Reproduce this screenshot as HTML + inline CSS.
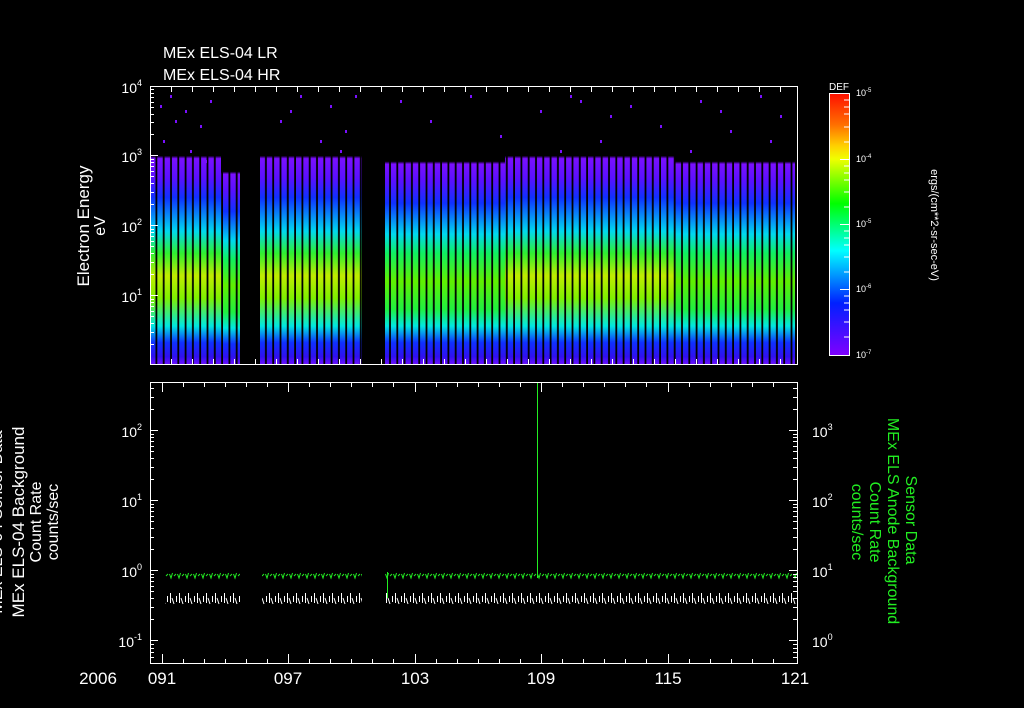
<!DOCTYPE html>
<html><head><meta charset="utf-8"><style>
html,body{margin:0;padding:0;background:#000;}
svg{display:block}
text{font-family:"Liberation Sans",sans-serif;fill:#fff}
</style></head><body>
<svg width="1024" height="708" viewBox="0 0 1024 708" xmlns="http://www.w3.org/2000/svg">
<defs>
<linearGradient id="sp" x1="0" y1="0" x2="0" y2="1">
<stop offset="0" stop-color="#7a00ff" stop-opacity="0"/>
<stop offset="0.27" stop-color="#7a00ff" stop-opacity="0"/>
<stop offset="0.28" stop-color="#7a10ff"/>
<stop offset="0.34" stop-color="#5a10ff"/>
<stop offset="0.42" stop-color="#1030ff"/>
<stop offset="0.53" stop-color="#00d8f0"/>
<stop offset="0.6" stop-color="#10f060"/>
<stop offset="0.7" stop-color="#60f000"/>
<stop offset="0.8" stop-color="#20f040"/>
<stop offset="0.86" stop-color="#00e8e0"/>
<stop offset="0.92" stop-color="#1030ff"/>
<stop offset="0.97" stop-color="#3010f0"/>
<stop offset="1" stop-color="#7010ff"/>
</linearGradient>
<linearGradient id="sp2" x1="0" y1="0" x2="0" y2="1">
<stop offset="0" stop-color="#7a00ff" stop-opacity="0"/>
<stop offset="0.25" stop-color="#7a00ff" stop-opacity="0"/>
<stop offset="0.26" stop-color="#7a10ff"/>
<stop offset="0.33" stop-color="#5a10ff"/>
<stop offset="0.4" stop-color="#1030ff"/>
<stop offset="0.52" stop-color="#00d8f0"/>
<stop offset="0.6" stop-color="#30f030"/>
<stop offset="0.68" stop-color="#c0ec00"/>
<stop offset="0.76" stop-color="#80f000"/>
<stop offset="0.86" stop-color="#00e8e0"/>
<stop offset="0.92" stop-color="#1030ff"/>
<stop offset="0.97" stop-color="#3010f0"/>
<stop offset="1" stop-color="#7010ff"/>
</linearGradient>
<linearGradient id="cb" x1="0" y1="0" x2="0" y2="1">
<stop offset="0" stop-color="#ff1000"/>
<stop offset="0.12" stop-color="#ff7000"/>
<stop offset="0.2" stop-color="#ffd000"/>
<stop offset="0.25" stop-color="#f0ff00"/>
<stop offset="0.42" stop-color="#00ff00"/>
<stop offset="0.6" stop-color="#00ffff"/>
<stop offset="0.8" stop-color="#0020ff"/>
<stop offset="1" stop-color="#8000ff"/>
</linearGradient>
<pattern id="stripes" x="150" y="0" width="7.3" height="10" patternUnits="userSpaceOnUse">
<rect x="5.5" y="0" width="1.8" height="10" fill="#000"/>
</pattern>
<pattern id="gz" x="385" y="570" width="8" height="12" patternUnits="userSpaceOnUse">
<path d="M0.5 4 L2 8 L3.5 3 M5 6 L7 4" stroke="#2e2" fill="none" stroke-width="1"/>
</pattern>
<pattern id="wz" x="385" y="590" width="9" height="18" patternUnits="userSpaceOnUse">
<path d="M1.5 3 L1.5 13 M3 8 L5 14 M7.5 6 L7.5 12" stroke="#fff" fill="none" stroke-width="1"/>
</pattern>
</defs>

<text x="163" y="58" font-size="16">MEx ELS-04 LR</text>
<text x="163" y="80" font-size="16">MEx ELS-04 HR</text>

<rect x="151" y="86" width="70" height="279" fill="url(#sp2)"/>
<rect x="221" y="100" width="19" height="265" fill="url(#sp)"/>
<rect x="260" y="86" width="102" height="279" fill="url(#sp2)"/>
<rect x="385" y="86" width="120" height="279" fill="url(#sp)"/>
<rect x="505" y="86" width="170" height="279" fill="url(#sp2)"/>
<rect x="675" y="86" width="120" height="279" fill="url(#sp)"/>
<rect x="150" y="86" width="647" height="279" fill="url(#stripes)"/>
<g fill="#7a10ff">
<rect x="170" y="95" width="2" height="3"/><rect x="185" y="110" width="2" height="3"/><rect x="200" y="125" width="2" height="3"/><rect x="163" y="140" width="2" height="3"/><rect x="210" y="100" width="2" height="3"/><rect x="190" y="150" width="2" height="3"/><rect x="175" y="120" width="2" height="3"/><rect x="205" y="160" width="2" height="3"/><rect x="160" y="105" width="2" height="3"/>
<rect x="280" y="120" width="2" height="3"/><rect x="300" y="95" width="2" height="3"/><rect x="330" y="105" width="2" height="3"/><rect x="345" y="130" width="2" height="3"/><rect x="320" y="140" width="2" height="3"/><rect x="355" y="95" width="2" height="3"/><rect x="290" y="110" width="2" height="3"/><rect x="340" y="150" width="2" height="3"/>
<rect x="400" y="100" width="2" height="3"/><rect x="430" y="120" width="2" height="3"/><rect x="470" y="95" width="2" height="3"/><rect x="500" y="135" width="2" height="3"/><rect x="540" y="110" width="2" height="3"/><rect x="570" y="95" width="2" height="3"/><rect x="600" y="140" width="2" height="3"/><rect x="630" y="105" width="2" height="3"/><rect x="660" y="125" width="2" height="3"/><rect x="700" y="100" width="2" height="3"/><rect x="730" y="130" width="2" height="3"/><rect x="760" y="95" width="2" height="3"/><rect x="780" y="115" width="2" height="3"/><rect x="690" y="150" width="2" height="3"/><rect x="560" y="150" width="2" height="3"/><rect x="580" y="100" width="2" height="3"/><rect x="610" y="115" width="2" height="3"/><rect x="720" y="110" width="2" height="3"/><rect x="770" y="140" width="2" height="3"/>
</g>
<g stroke="#fff" stroke-width="1" fill="none">
<path d="M150.5 86 V365 M797.5 86 V365 M150 86.5 H797 M150 364.5 H797"/>
<path d="M150 155.5 h8 M150 225.5 h8 M150 295.5 h8 M150 134.5h4 M150 122.5h4 M150 114.5h4 M150 107.5h4 M150 102.5h4 M150 97.5h4 M150 93.5h4 M150 89.5h4 M150 204.5h4 M150 192.5h4 M150 183.5h4 M150 176.5h4 M150 171.5h4 M150 166.5h4 M150 162.5h4 M150 159.5h4 M150 274.5h4 M150 262.5h4 M150 253.5h4 M150 246.5h4 M150 241.5h4 M150 236.5h4 M150 232.5h4 M150 229.5h4 M150 344.5h4 M150 332.5h4 M150 323.5h4 M150 316.5h4 M150 311.5h4 M150 306.5h4 M150 302.5h4 M150 299.5h4"/>
<path d="M171.5 86v6 M192.5 86v6 M213.5 86v6 M234.5 86v6 M255.5 86v6 M276.5 86v6 M297.5 86v6 M318.5 86v6 M339.5 86v6 M360.5 86v6 M381.5 86v6 M402.5 86v6 M423.5 86v6 M444.5 86v6 M465.5 86v6 M486.5 86v6 M507.5 86v6 M528.5 86v6 M549.5 86v6 M570.5 86v6 M591.5 86v6 M612.5 86v6 M633.5 86v6 M654.5 86v6 M675.5 86v6 M696.5 86v6 M717.5 86v6 M738.5 86v6 M759.5 86v6 M780.5 86v6"/>
<path d="M171.5 365v-6 M192.5 365v-6 M213.5 365v-6 M234.5 365v-6 M255.5 365v-6 M276.5 365v-6 M297.5 365v-6 M318.5 365v-6 M339.5 365v-6 M360.5 365v-6 M381.5 365v-6 M402.5 365v-6 M423.5 365v-6 M444.5 365v-6 M465.5 365v-6 M486.5 365v-6 M507.5 365v-6 M528.5 365v-6 M549.5 365v-6 M570.5 365v-6 M591.5 365v-6 M612.5 365v-6 M633.5 365v-6 M654.5 365v-6 M675.5 365v-6 M696.5 365v-6 M717.5 365v-6 M738.5 365v-6 M759.5 365v-6 M780.5 365v-6"/>
</g>
<g font-size="14" text-anchor="end">
<text x="142" y="93">10<tspan font-size="9" dy="-7">4</tspan></text>
<text x="142" y="162">10<tspan font-size="9" dy="-7">3</tspan></text>
<text x="142" y="232">10<tspan font-size="9" dy="-7">2</tspan></text>
<text x="142" y="302">10<tspan font-size="9" dy="-7">1</tspan></text>
</g>
<text transform="translate(89,226) rotate(-90)" font-size="17" text-anchor="middle">Electron Energy</text>
<text transform="translate(105,226) rotate(-90)" font-size="16" text-anchor="middle">eV</text>

<text x="829" y="90" font-size="10">DEF</text>
<rect x="829.5" y="93.5" width="20" height="262" fill="url(#cb)" stroke="#fff"/>
<g stroke="#fff"><path d="M840 159.5h9 M840 224.5h9 M840 289.5h9 M844 100h5 M844 107h5 M844 114h5 M844 127h5 M844 142h5 M844 166h5 M844 173h5 M844 180h5 M844 192h5 M844 207h5 M844 231h5 M844 238h5 M844 245h5 M844 257h5 M844 272h5 M844 296h5 M844 303h5 M844 310h5 M844 322h5 M844 337h5"/></g>
<g font-size="9">
<text x="856" y="96">10<tspan font-size="6" dy="-4">-5</tspan></text>
<text x="856" y="162">10<tspan font-size="6" dy="-4">-4</tspan></text>
<text x="856" y="227">10<tspan font-size="6" dy="-4">-5</tspan></text>
<text x="856" y="292">10<tspan font-size="6" dy="-4">-6</tspan></text>
<text x="856" y="358">10<tspan font-size="6" dy="-4">-7</tspan></text>
</g>
<text transform="translate(931,225) rotate(90)" font-size="11" text-anchor="middle">ergs/(cm**2-sr-sec-eV)</text>

<rect x="385" y="570" width="412" height="12" fill="url(#gz)"/>
<rect x="262" y="570" width="100" height="12" fill="url(#gz)"/>
<rect x="165" y="570" width="75" height="12" fill="url(#gz)"/>
<rect x="385" y="590" width="412" height="18" fill="url(#wz)"/>
<rect x="262" y="590" width="100" height="18" fill="url(#wz)"/>
<rect x="165" y="590" width="75" height="18" fill="url(#wz)"/>
<rect x="537" y="382" width="1" height="196" fill="#2e2"/>
<rect x="387" y="572" width="1" height="26" fill="#2e2"/>
<g stroke="#fff" fill="none">
<path d="M150.5 382 V664 M797.5 382 V664 M150 382.5 H797 M150 663.5 H797"/>
<path d="M150 430.5h8 M150 500.5h8 M150 570.5h8 M150 640.5h8 M150 409.5h4 M150 397.5h4 M150 388.5h4 M150 479.5h4 M150 467.5h4 M150 458.5h4 M150 451.5h4 M150 446.5h4 M150 441.5h4 M150 437.5h4 M150 434.5h4 M150 549.5h4 M150 537.5h4 M150 528.5h4 M150 521.5h4 M150 516.5h4 M150 511.5h4 M150 507.5h4 M150 504.5h4 M150 619.5h4 M150 607.5h4 M150 598.5h4 M150 591.5h4 M150 586.5h4 M150 581.5h4 M150 577.5h4 M150 574.5h4 M150 644.5h4 M150 648.5h4 M150 652.5h4 M150 657.5h4"/>
<path d="M797 430.5h-8 M797 500.5h-8 M797 570.5h-8 M797 640.5h-8 M797 409.5h-4 M797 397.5h-4 M797 388.5h-4 M797 479.5h-4 M797 467.5h-4 M797 458.5h-4 M797 451.5h-4 M797 446.5h-4 M797 441.5h-4 M797 437.5h-4 M797 434.5h-4 M797 549.5h-4 M797 537.5h-4 M797 528.5h-4 M797 521.5h-4 M797 516.5h-4 M797 511.5h-4 M797 507.5h-4 M797 504.5h-4 M797 619.5h-4 M797 607.5h-4 M797 598.5h-4 M797 591.5h-4 M797 586.5h-4 M797 581.5h-4 M797 577.5h-4 M797 574.5h-4 M797 644.5h-4 M797 648.5h-4 M797 652.5h-4 M797 657.5h-4"/>
<path d="M162.5 664v-10 M288.5 664v-10 M415.5 664v-10 M541.5 664v-10 M668.5 664v-10 M183.5 664v-5 M204.5 664v-5 M225.5 664v-5 M246.5 664v-5 M267.5 664v-5 M309.5 664v-5 M330.5 664v-5 M351.5 664v-5 M372.5 664v-5 M393.5 664v-5 M436.5 664v-5 M457.5 664v-5 M478.5 664v-5 M499.5 664v-5 M520.5 664v-5 M562.5 664v-5 M583.5 664v-5 M604.5 664v-5 M625.5 664v-5 M646.5 664v-5 M689.5 664v-5 M710.5 664v-5 M731.5 664v-5 M752.5 664v-5 M773.5 664v-5"/>
<path d="M162.5 382v10 M288.5 382v10 M415.5 382v10 M541.5 382v10 M668.5 382v10 M183.5 382v5 M204.5 382v5 M225.5 382v5 M246.5 382v5 M267.5 382v5 M309.5 382v5 M330.5 382v5 M351.5 382v5 M372.5 382v5 M393.5 382v5 M436.5 382v5 M457.5 382v5 M478.5 382v5 M499.5 382v5 M520.5 382v5 M562.5 382v5 M583.5 382v5 M604.5 382v5 M625.5 382v5 M646.5 382v5 M689.5 382v5 M710.5 382v5 M731.5 382v5 M752.5 382v5 M773.5 382v5"/>
</g>
<g font-size="14" text-anchor="end">
<text x="142" y="437">10<tspan font-size="9" dy="-7">2</tspan></text>
<text x="142" y="507">10<tspan font-size="9" dy="-7">1</tspan></text>
<text x="142" y="577">10<tspan font-size="9" dy="-7">0</tspan></text>
<text x="142" y="647">10<tspan font-size="9" dy="-7">-1</tspan></text>
</g>
<g font-size="14">
<text x="812" y="437">10<tspan font-size="9" dy="-7">3</tspan></text>
<text x="812" y="507">10<tspan font-size="9" dy="-7">2</tspan></text>
<text x="812" y="577">10<tspan font-size="9" dy="-7">1</tspan></text>
<text x="812" y="647">10<tspan font-size="9" dy="-7">0</tspan></text>
</g>
<g font-size="17" text-anchor="middle">
<text x="162" y="684">091</text><text x="288" y="684">097</text><text x="415" y="684">103</text><text x="541" y="684">109</text><text x="668" y="684">115</text><text x="795" y="684">121</text>
</g>
<text x="98" y="684" font-size="17" text-anchor="middle">2006</text>
<text transform="translate(2,522) rotate(-90)" font-size="16" text-anchor="middle">MEx ELS-04 Sensor Data</text>
<text transform="translate(24,522) rotate(-90)" font-size="17" text-anchor="middle">MEx ELS-04 Background</text>
<text transform="translate(41,522) rotate(-90)" font-size="16" text-anchor="middle">Count Rate</text>
<text transform="translate(58,522) rotate(-90)" font-size="16" text-anchor="middle">counts/sec</text>
<g font-size="16" text-anchor="middle">
<text transform="translate(906,520) rotate(90)" style="fill:#2e2">Sensor Data</text>
<text transform="translate(888,521) rotate(90)" style="fill:#2e2">MEx ELS Anode Background</text>
<text transform="translate(870,522) rotate(90)" style="fill:#2e2">Count Rate</text>
<text transform="translate(852,522) rotate(90)" style="fill:#2e2">counts/sec</text>
</g>
</svg>
</body></html>
